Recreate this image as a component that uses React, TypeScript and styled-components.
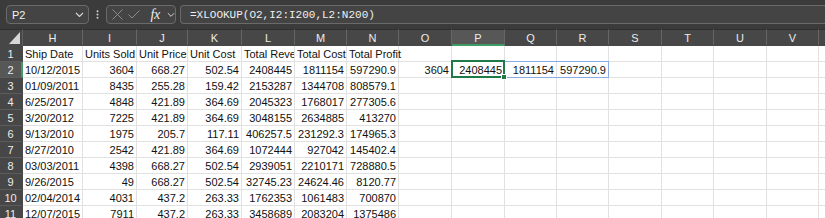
import styled, { createGlobalStyle, css } from "styled-components";

const GlobalStyle = createGlobalStyle`
  html, body {
    margin: 0;
    padding: 0;
    background: #3b3b3b;
  }
  #root {
    width: 825px;
    height: 218px;
    overflow: hidden;
  }
`;

const columns = ["H", "I", "J", "K", "L", "M", "N", "O", "P", "Q", "R", "S", "T", "U", "V", "W"];
const widths = [23, 60, 54, 51, 54, 53, 52, 52, 53, 53, 52, 52, 53, 52, 53, 52, 60];

type Row = (string | number)[];

const rows: Row[] = [
  ["Ship Date", "Units Sold", "Unit Price", "Unit Cost", "Total Revenue", "Total Cost", "Total Profit"],
  ["10/12/2015", 3604, 668.27, 502.54, 2408445, 1811154, 597290.9, 3604, 2408445, 1811154, 597290.9],
  ["01/09/2011", 8435, 255.28, 159.42, 2153287, 1344708, 808579.1],
  ["6/25/2017", 4848, 421.89, 364.69, 2045323, 1768017, 277305.6],
  ["3/20/2012", 7225, 421.89, 364.69, 3048155, 2634885, 413270],
  ["9/13/2010", 1975, 205.7, 117.11, 406257.5, 231292.3, 174965.3],
  ["8/27/2010", 2542, 421.89, 364.69, 1072444, 927042, 145402.4],
  ["03/03/2011", 4398, 668.27, 502.54, 2939051, 2210171, 728880.5],
  ["9/26/2015", 49, 668.27, 502.54, 32745.23, 24624.46, 8120.77],
  ["02/04/2014", 4031, 437.2, 263.33, 1762353, 1061483, 700870],
  ["12/07/2015", 7911, 437.2, 263.33, 3458689, 2083204, 1375486],
  [],
];

const FormulaBar = styled.div`
  display: flex;
  align-items: center;
  height: 29px;
  padding: 0 0 0 6px;
  box-sizing: border-box;
  background: #3b3b3b;
  font-family: "Liberation Sans", Arial, sans-serif;
  color: #f2f2f2;
`;

const Box = styled.div`
  height: 19px;
  box-sizing: border-box;
  border: 1px solid #6a6a6a;
  border-radius: 4px;
  background: #444444;
  display: flex;
  align-items: center;
`;

const NameBox = styled(Box)`
  width: 83px;
  justify-content: space-between;
  padding: 0 4px 0 5px;
  font-size: 11px;
`;

const Dots = styled.div`
  width: 17px;
  display: flex;
  justify-content: center;
`;

const FxGroup = styled(Box)`
  width: 70px;
  padding: 0 0 0 5px;
`;

const IconSlot = styled.span<{ $w: number }>`
  width: ${(p) => p.$w}px;
  display: flex;
  align-items: center;
  justify-content: center;
`;

const Fx = styled.span`
  font-family: "Liberation Serif", "DejaVu Serif", serif;
  font-style: italic;
  font-size: 14px;
  color: #f0f0f0;
  line-height: 1;
  letter-spacing: -0.3px;
`;

const FormulaInput = styled(Box)`
  flex: 1;
  margin-left: 4px;
  margin-right: -4px;
  padding-left: 9px;
  font-family: "Liberation Mono", "DejaVu Sans Mono", monospace;
  font-size: 11px;
  color: #f0f0f0;
  border-right: none;
  border-top-right-radius: 0;
  border-bottom-right-radius: 0;
`;

const Sheet = styled.div`
  display: grid;
  grid-template-columns: ${widths.map((w) => `${w}px`).join(" ")};
  grid-template-rows: 17px;
  grid-auto-rows: 16px;
  background: #ffffff;
  font-family: "Liberation Sans", Arial, sans-serif;
  font-size: 11px;
`;

const Corner = styled.div`
  background: #474747;
  border-right: 1px solid #5f5f5f;
  border-top: 1px solid #2f2f2f;
  position: relative;
  box-sizing: border-box;
`;

const CornerTriangle = styled.div`
  position: absolute;
  right: 2px;
  bottom: 2px;
  width: 0;
  height: 0;
  border-left: 11px solid transparent;
  border-bottom: 12px solid #d6d6d6;
`;

const ColHeader = styled.div<{ $active?: boolean }>`
  box-sizing: border-box;
  background: ${(p) => (p.$active ? "#575757" : "#474747")};
  border-right: 1px solid #666666;
  border-top: 1px solid #2f2f2f;
  border-bottom: 2px solid ${(p) => (p.$active ? "#3f9a63" : "#474747")};
  color: #ececec;
  display: flex;
  align-items: center;
  justify-content: center;
  padding-top: 1px;
`;

const RowHeader = styled.div<{ $active?: boolean }>`
  box-sizing: border-box;
  background: ${(p) => (p.$active ? "#575757" : "#474747")};
  border-bottom: 1px solid #5c5c5c;
  border-right: 2px solid ${(p) => (p.$active ? "#3f9a63" : "#474747")};
  color: #ececec;
  display: flex;
  align-items: center;
  justify-content: center;
`;

const Cell = styled.div<{
  $num?: boolean;
  $spillText?: boolean;
  $selected?: boolean;
  $spill?: "mid" | "end";
}>`
  position: relative;
  box-sizing: border-box;
  border-right: 1px solid #e1e1e1;
  border-bottom: 1px solid #e1e1e1;
  padding: 1px 2px 0 2px;
  line-height: 15px;
  color: #111111;
  white-space: nowrap;
  overflow: ${(p) => (p.$spillText ? "visible" : "hidden")};
  text-align: ${(p) => (p.$num ? "right" : "left")};

  ${(p) =>
    p.$selected &&
    css`
      overflow: visible;
      z-index: 2;
      &::after {
        content: "";
        position: absolute;
        top: -2px;
        left: -1px;
        right: -1px;
        bottom: -1px;
        border: 2px solid #1f7a47;
        pointer-events: none;
      }
      &::before {
        content: "";
        position: absolute;
        right: -3px;
        bottom: -3px;
        width: 4px;
        height: 4px;
        background: #1f7a47;
        border: 1px solid #ffffff;
        z-index: 3;
      }
    `}

  ${(p) =>
    p.$spill &&
    css`
      overflow: visible;
      z-index: 1;
      &::after {
        content: "";
        position: absolute;
        top: -1px;
        left: 0;
        right: -1px;
        bottom: -1px;
        border-top: 1px solid #8aabe4;
        border-bottom: 1px solid #8aabe4;
        border-right: ${p.$spill === "end" ? "1px solid #8aabe4" : "none"};
        pointer-events: none;
      }
    `}
`;

const CellText = styled.span`
  position: relative;
  z-index: 1;
`;

const ChevronDown = ({ color = "#d8d8d8" }: { color?: string }) => (
  <svg width="9" height="6" viewBox="0 0 9 6">
    <path d="M1 1 L4.5 4.5 L8 1" fill="none" stroke={color} strokeWidth="1.1" />
  </svg>
);

const CrossIcon = () => (
  <svg width="11" height="11" viewBox="0 0 11 11">
    <path d="M0.5 0.5 L10.5 10.5 M10.5 0.5 L0.5 10.5" stroke="#8c8c8c" strokeWidth="1" />
  </svg>
);

const CheckIcon = () => (
  <svg width="12" height="9" viewBox="0 0 12 9">
    <path d="M0.5 4.5 L4 8 L11.5 0.5" fill="none" stroke="#8c8c8c" strokeWidth="1" />
  </svg>
);

const VDots = () => (
  <svg width="3" height="9" viewBox="0 0 3 9">
    <circle cx="1.5" cy="1.2" r="1" fill="#d0d0d0" />
    <circle cx="1.5" cy="4.5" r="1" fill="#d0d0d0" />
    <circle cx="1.5" cy="7.8" r="1" fill="#d0d0d0" />
  </svg>
);

export default function App() {
  return (
    <>
      <GlobalStyle />
      <FormulaBar>
        <NameBox>
          <span>P2</span>
          <ChevronDown />
        </NameBox>
        <Dots>
          <VDots />
        </Dots>
        <FxGroup>
          <IconSlot $w={12}>
            <CrossIcon />
          </IconSlot>
          <IconSlot $w={20}>
            <CheckIcon />
          </IconSlot>
          <IconSlot $w={24}>
            <Fx>fx</Fx>
          </IconSlot>
          <IconSlot $w={8}>
            <ChevronDown />
          </IconSlot>
        </FxGroup>
        <FormulaInput>=XLOOKUP(O2,I2:I200,L2:N200)</FormulaInput>
      </FormulaBar>
      <Sheet>
        <Corner>
          <CornerTriangle />
        </Corner>
        {columns.map((c) => (
          <ColHeader key={c} $active={c === "P"}>
            {c}
          </ColHeader>
        ))}
        {rows.map((row, r) => (
          <Row key={r} index={r} row={row} />
        ))}
      </Sheet>
    </>
  );
}

function Row({ index, row }: { index: number; row: Row }) {
  const rowNum = index + 1;
  return (
    <>
      <RowHeader $active={rowNum === 2}>{rowNum}</RowHeader>
      {columns.map((col, c) => {
        const v = row[c];
        const isNum = typeof v === "number";
        const selected = rowNum === 2 && col === "P";
        const spill = rowNum === 2 && col === "Q" ? "mid" : rowNum === 2 && col === "R" ? "end" : undefined;
        return (
          <Cell
            key={col}
            $num={isNum}
            $spillText={!isNum && v !== undefined && row[c + 1] === undefined}
            $selected={selected}
            $spill={spill}
          >
            {v !== undefined && <CellText>{String(v)}</CellText>}
          </Cell>
        );
      })}
    </>
  );
}
